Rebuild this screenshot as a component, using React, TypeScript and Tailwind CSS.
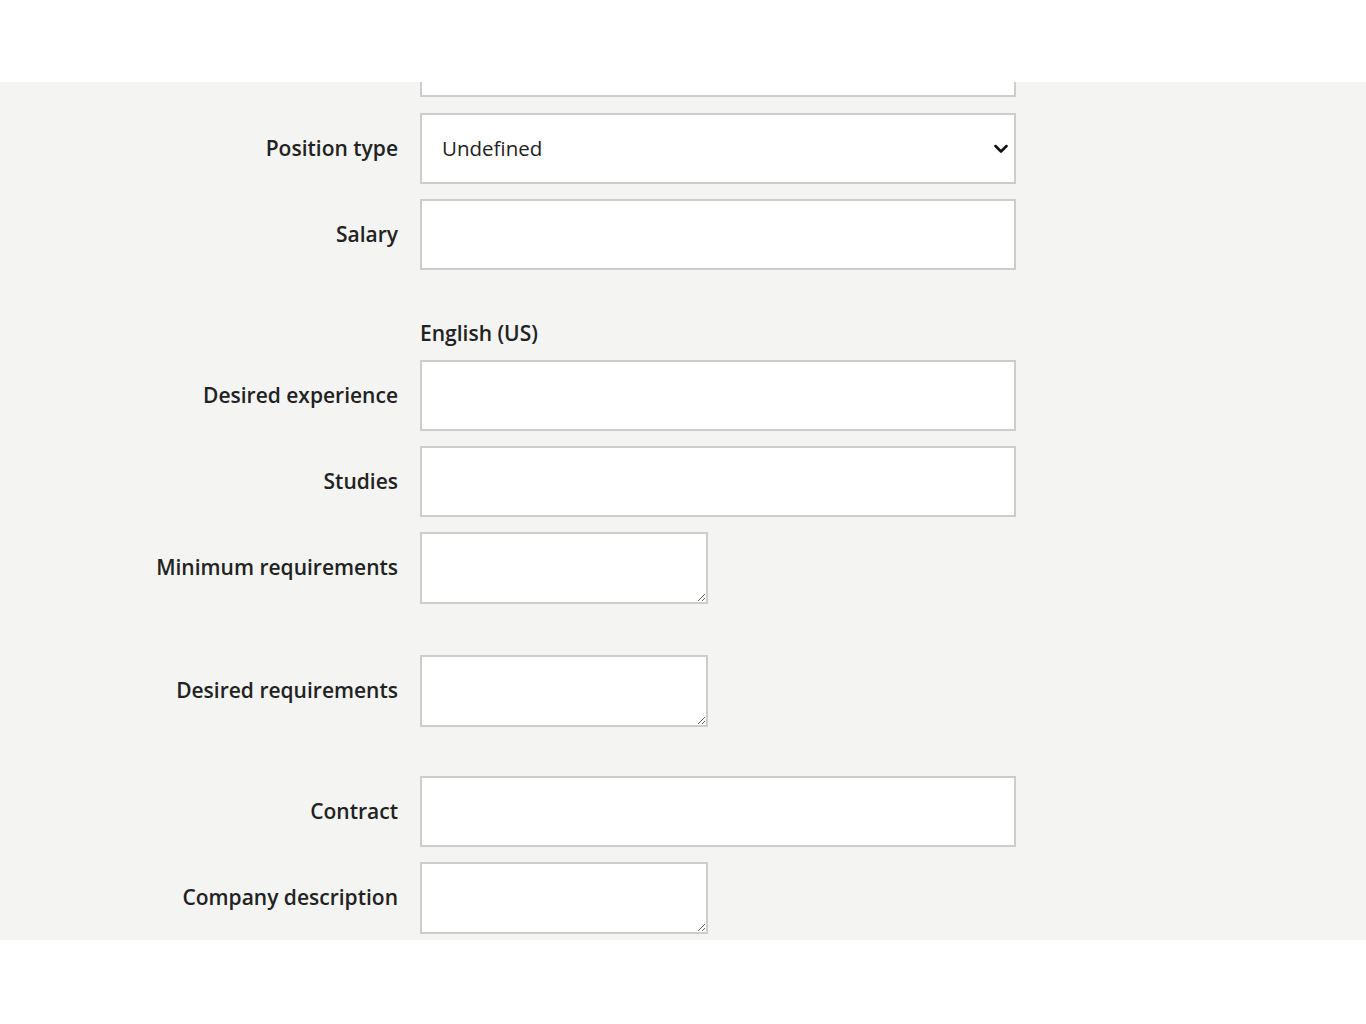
import React from "react";

const font = { fontFamily: '"Open Sans", "Noto Sans", sans-serif' };

function Row({ label, children, className = "" }: { label?: string; children: React.ReactNode; className?: string }) {
  return (
    <div className={`flex items-center ${className}`}>
      <label className="w-[398px] shrink-0 text-right text-[21px] font-semibold text-[#222]">{label}</label>
      <div className="ml-[22px]">{children}</div>
    </div>
  );
}

const inputCls = "block w-[596px] h-[71px] border-2 border-[#cdcdcd] bg-white px-5 text-[20.5px] text-[#222] outline-none";
const areaCls = "block w-[288px] h-[72px] border-2 border-[#cdcdcd] bg-white px-3 py-2 text-[18px] text-[#222] outline-none resize";

export default function App() {
  return (
    <div className="min-h-[1024px] bg-white" style={font}>
      <div className="h-[82px] bg-white" />
      <div className="bg-[#f4f4f2] pb-[6px]">
        {/* tail of the field above the fold */}
        <Row className="mb-[16px]">
          <div className="w-[596px] h-[15px] border-x-2 border-b-2 border-[#cdcdcd] bg-white" />
        </Row>

        <Row label="Position type" className="mb-[15px]">
          <div className="relative">
            <select className={`${inputCls} appearance-none`} defaultValue="undefined">
              <option value="undefined">Undefined</option>
            </select>
            <svg
              className="pointer-events-none absolute right-[8px] top-1/2 -translate-y-1/2"
              width="14"
              height="9"
              viewBox="0 0 14 9"
              fill="none"
            >
              <polyline points="1.5,1.5 7,7 12.5,1.5" stroke="#111" strokeWidth="2.6" strokeLinecap="round" strokeLinejoin="round" />
            </svg>
          </div>
        </Row>

        <Row label="Salary" className="mb-[50px]">
          <input className={inputCls} />
        </Row>

        <Row className="mb-[14px]">
          <div className="text-[21px] font-semibold text-[#222] leading-[26px]">English (US)</div>
        </Row>

        <Row label="Desired experience" className="mb-[15px]">
          <input className={inputCls} />
        </Row>

        <Row label="Studies" className="mb-[15px]">
          <input className={inputCls} />
        </Row>

        <Row label="Minimum requirements" className="mb-[51px]">
          <textarea className={areaCls} />
        </Row>

        <Row label="Desired requirements" className="mb-[49px]">
          <textarea className={areaCls} />
        </Row>

        <Row label="Contract" className="mb-[15px]">
          <input className={inputCls} />
        </Row>

        <Row label="Company description">
          <textarea className={areaCls} />
        </Row>
      </div>
    </div>
  );
}
